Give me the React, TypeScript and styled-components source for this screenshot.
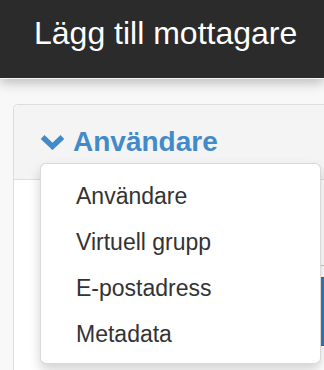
import React from 'react';
import styled, { createGlobalStyle } from 'styled-components';

const GlobalStyle = createGlobalStyle`
  html, body {
    margin: 0;
    padding: 0;
    background: #f8f8f8;
    font-family: "Liberation Sans", Arial, sans-serif;
    overflow: hidden;
  }
  * {
    box-sizing: border-box;
  }
`;

const Header = styled.header`
  position: relative;
  z-index: 2;
  height: 79px;
  padding: 17px 0 0 34px;
  background-color: #2b2b2b;
  border-bottom: 1px solid #f4f4f4;
  box-shadow: 0 3px 12px rgba(0, 0, 0, 0.28);
  color: #ffffff;
  font-size: 32px;
  line-height: 32px;
  white-space: nowrap;
`;

const Main = styled.main`
  height: 291px;
  padding-top: 25px;
  overflow: hidden;
`;

const Panel = styled.section`
  position: relative;
  margin-left: 13px;
  margin-right: -40px;
  height: 280px;
  background-color: #ffffff;
  border: 1px solid #dddddd;
  border-radius: 5px;
`;

const PanelHeading = styled.div`
  display: flex;
  align-items: flex-start;
  height: 75px;
  padding: 23px 0 0 26px;
  background-color: #f4f4f4;
  border-bottom: 1px solid #dddddd;
  border-radius: 5px 5px 0 0;
`;

const Toggle = styled.button`
  display: flex;
  align-items: center;
  gap: 8px;
  padding: 0;
  border: 0;
  background: none;
  color: #428bca;
  font-family: inherit;
  font-size: 28px;
  font-weight: bold;
  line-height: 28px;
  cursor: pointer;
`;

const Chevron = styled.svg`
  width: 25px;
  height: 16px;
  flex-shrink: 0;
`;

const Dropdown = styled.ul`
  position: absolute;
  z-index: 1;
  top: 58px;
  left: 26px;
  width: 281px;
  height: 201px;
  margin: 0;
  padding: 9px 0 6px;
  list-style: none;
  background-color: #ffffff;
  border: 1px solid rgba(0, 0, 0, 0.15);
  border-radius: 6px;
  box-shadow: 0 6px 12px rgba(0, 0, 0, 0.175);
`;

const DropdownItem = styled.li`
  height: 46px;
  padding-left: 35px;
  color: #333333;
  font-size: 23px;
  line-height: 46px;
  white-space: nowrap;
  cursor: pointer;
`;

const PanelBody = styled.div`
  padding: 0 16px 0 40px;
`;

const InfoRow = styled.div`
  height: 86px;
  border-bottom: 1px solid #c4c4c4;
`;

const ActionRow = styled.div`
  display: flex;
  justify-content: flex-end;
  padding-top: 11px;
`;

const PrimaryButton = styled.button`
  width: 60px;
  height: 69px;
  background-color: #337ab7;
  border: 1px solid #2e6da4;
  border-radius: 4px;
`;

const recipientTypes = ['Användare', 'Virtuell grupp', 'E-postadress', 'Metadata'];

const App: React.FC = () => {
  return (
    <>
      <GlobalStyle />
      <Header>Lägg till mottagare</Header>
      <Main>
        <Panel>
          <PanelHeading>
            <Toggle>
              <Chevron viewBox="0 0 25 16">
                <polyline
                  points="2.6,3 12.5,12.4 22.4,3"
                  fill="none"
                  stroke="#428bca"
                  strokeWidth="5.4"
                  strokeLinejoin="miter"
                />
              </Chevron>
              Användare
            </Toggle>
          </PanelHeading>
          <Dropdown>
            {recipientTypes.map((type) => (
              <DropdownItem key={type}>{type}</DropdownItem>
            ))}
          </Dropdown>
          <PanelBody>
            <InfoRow />
            <ActionRow>
              <PrimaryButton />
            </ActionRow>
          </PanelBody>
        </Panel>
      </Main>
    </>
  );
};

export default App;
